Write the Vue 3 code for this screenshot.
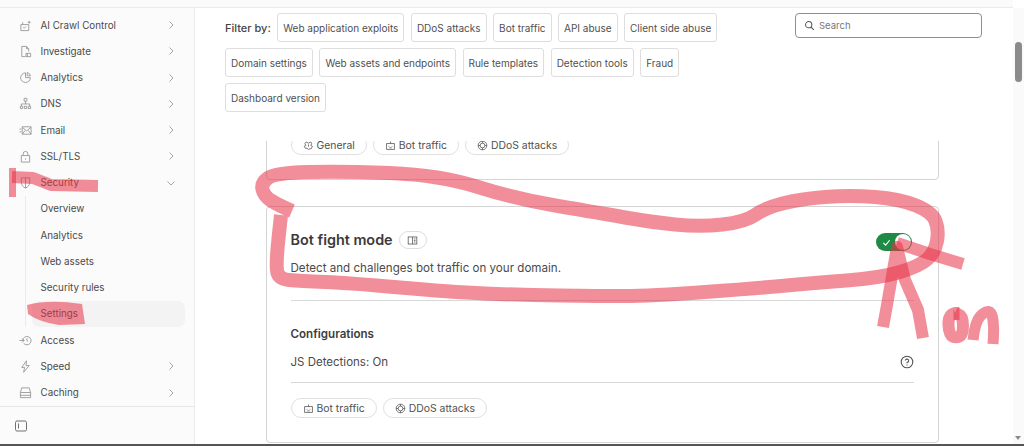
<script setup>
const iconPaths = {
  ai: 'M2 6h8.500v6.500H2zM4 3.500V6M4.500 9l1 1 2-2M11 2v3M9.500 3.500h3',
  doc: 'M3 1.500h5l2.500 2.500v3M3 1.500v11h4M8 1.500V4h2.500M7.500 9h5v3.500h-5zM9 9v3.500',
  clock: 'M7 2a5.200 5.200 0 1 0 5.200 5.200H7zM8.800 1.600a5 5 0 0 1 3.600 3.600H8.800z',
  dns: 'M5.500 1.500h3v3h-3zM7 4.500v3M2.500 10V7.500h9V10M1.500 10h2.500v2.500H1.500zM5.800 10h2.500v2.500H5.800zM10 10h2.500v2.500H10z',
  mail: 'M3.500 3h9.500v8H3.500zM3.500 3.500 8.200 7.500 13 3.500M3.500 11 6.500 7M13 11 10 7M.5 5.500h2M.5 8.500h2',
  lock: 'M2.500 6h9v7h-9zM4.500 6V4a2.500 2.500 0 0 1 5 0v2M7 9v1.500',
  shield: 'M2.500 2h9v5c0 3-2 5-4.500 6C4.500 12 2.500 10 2.500 7zM7 2v11',
  access: 'M4 7a4.500 4.500 0 1 1 1 3M.5 7h5M3.500 5l2 2-2 2M8.500 4.500V7l1.500 1',
  bolt: 'M8 .8 3 8h3l-1 5.200L11 6H7.600z',
  cache: 'M3 2h8l1.500 5v5.500h-11V7zM1.500 7h11M1.500 10h11',
  general: 'M4 2.500 7 4l3-1.500 1 2-1 2.500 2 1-1.500 3H9L7 12l-2-1.500H3L1.500 8l2-1-1-2.500zM7 5.500v3',
  bot: 'M2 4.500h10v7.500H2zM7 2v2.500M5 7.500v1M9 7.500v1M5.500 10h3',
  ddos: 'M7 1.500a5.500 5.500 0 1 0 0 11 5.500 5.500 0 0 0 0-11zM7 4a3 3 0 1 0 0 6 3 3 0 0 0 0-6zM1.500 7H4M10 7h2.500M7 1.500V4M7 10v2.500'
}

const navTop = [
  { label: 'AI Crawl Control', icon: 'ai', arrow: true },
  { label: 'Investigate', icon: 'doc', arrow: true },
  { label: 'Analytics', icon: 'clock', arrow: true },
  { label: 'DNS', icon: 'dns', arrow: true },
  { label: 'Email', icon: 'mail', arrow: true },
  { label: 'SSL/TLS', icon: 'lock', arrow: true }
]
const securityLinks = ['Overview', 'Analytics', 'Web assets', 'Security rules', 'Settings']
const navBottom = [
  { label: 'Access', icon: 'access', arrow: false },
  { label: 'Speed', icon: 'bolt', arrow: true },
  { label: 'Caching', icon: 'cache', arrow: true }
]
const filters = [
  'Web application exploits', 'DDoS attacks', 'Bot traffic', 'API abuse', 'Client side abuse',
  'Domain settings', 'Web assets and endpoints', 'Rule templates', 'Detection tools', 'Fraud',
  'Dashboard version'
]
const firstCardTags = [
  { label: 'General', icon: 'general' },
  { label: 'Bot traffic', icon: 'bot' },
  { label: 'DDoS attacks', icon: 'ddos' }
]
const botTags = [
  { label: 'Bot traffic', icon: 'bot' },
  { label: 'DDoS attacks', icon: 'ddos' }
]

// rounds off a hand-traced marker line through its points
function smooth(points) {
  let d = `M${points[0][0]} ${points[0][1]}`
  for (let i = 1; i < points.length - 1; i++) {
    const [x, y] = points[i]
    const [nx, ny] = points[i + 1]
    d += `Q${x} ${y} ${(x + nx) / 2} ${(y + ny) / 2}`
  }
  const last = points[points.length - 1]
  return d + `L${last[0]} ${last[1]}`
}

const loopPath = smooth([
  [292, 211], [278, 205], [264, 196], [261, 183], [275, 173], [340, 171], [440, 175],
  [516, 199], [600, 213], [650, 222], [700, 227], [745, 222], [765, 208], [800, 199],
  [850, 195], [900, 199], [932, 212], [939, 230], [935, 252], [920, 266], [880, 278],
  [813, 283], [760, 288], [650, 296], [600, 296], [520, 295], [450, 292], [350, 283],
  [300, 281], [278, 279], [276, 262], [281, 215]
])
const onLetterO = smooth([[955, 313], [948, 315], [949, 335], [956, 338], [963, 335], [963, 316], [955, 313]])
const onLetterN = smooth([[973, 340], [975, 322], [985, 311], [992, 312], [994, 328], [993, 344]])
</script>

<template>
  <div class="page">
    <div class="topbar"></div>
    <div class="body">
      <aside class="sidebar">
        <nav class="nav">
          <a v-for="item in navTop" :key="item.label" class="nav-item">
            <svg class="nav-icon" viewBox="0 0 14 14"><path :d="iconPaths[item.icon]" /></svg>
            <span class="nav-label">{{ item.label }}</span>
            <svg class="chevron" viewBox="0 0 10 10"><path d="M3.500 1.500 7 5 3.500 8.500" /></svg>
          </a>
          <a class="nav-item">
            <svg class="nav-icon" viewBox="0 0 14 14"><path :d="iconPaths.shield" /></svg>
            <span class="nav-label">Security</span>
            <svg class="chevron" viewBox="0 0 10 10"><path d="M1.500 3.500 5 7l3.500-3.500" /></svg>
          </a>
          <div class="sub-nav">
            <a
              v-for="link in securityLinks"
              :key="link"
              class="sub-item"
              :class="{ active: link === 'Settings' }"
            >{{ link }}</a>
          </div>
          <a v-for="item in navBottom" :key="item.label" class="nav-item">
            <svg class="nav-icon" viewBox="0 0 14 14"><path :d="iconPaths[item.icon]" /></svg>
            <span class="nav-label">{{ item.label }}</span>
            <svg v-if="item.arrow" class="chevron" viewBox="0 0 10 10"><path d="M3.500 1.500 7 5 3.500 8.500" /></svg>
          </a>
        </nav>
        <div class="sidebar-footer">
          <svg class="collapse-icon" viewBox="0 0 14 14">
            <rect x="1.500" y="2" width="11" height="10" rx="1.500" />
            <path d="M4.500 4.500v5" />
          </svg>
        </div>
      </aside>

      <main class="main">
        <div class="toolbar">
          <div class="filters">
            <span class="filter-label">Filter by:</span>
            <button v-for="f in filters" :key="f" class="filter-chip">{{ f }}</button>
          </div>
          <div class="search">
            <svg class="search-icon" viewBox="0 0 14 14">
              <circle cx="6" cy="6" r="4" />
              <path d="m9 9 3.500 3.500" />
            </svg>
            <span>Search</span>
          </div>
        </div>

        <div class="cards">
          <section class="card card-clipped">
            <div class="tags">
              <span v-for="t in firstCardTags" :key="t.label" class="tag">
                <svg class="tag-icon" viewBox="0 0 14 14"><path :d="iconPaths[t.icon]" /></svg>
                {{ t.label }}
              </span>
            </div>
          </section>

          <section class="card">
            <div class="card-head">
              <h3>Bot fight mode</h3>
              <span class="doc-pill">
                <svg viewBox="0 0 14 14">
                  <rect x="1.500" y="2.500" width="11" height="9" />
                  <path d="M7 2.500v9M8.800 5h2M8.800 7h2M8.800 9h2" />
                </svg>
              </span>
              <span class="toggle">
                <svg class="toggle-check" viewBox="0 0 10 10"><path d="M1.500 5.500 4 8l4.500-5.500" /></svg>
                <span class="toggle-knob"></span>
              </span>
            </div>
            <p class="card-desc">Detect and challenges bot traffic on your domain.</p>
            <hr class="divider" />
            <h4>Configurations</h4>
            <div class="config-row">
              <span>JS Detections: On</span>
              <svg class="help" viewBox="0 0 14 14">
                <circle cx="7" cy="7" r="5.800" />
                <path d="M5.300 5.500A1.700 1.700 0 1 1 7 7.500v.8M7 9.600v.9" />
              </svg>
            </div>
            <hr class="divider divider-config" />
            <div class="tags">
              <span v-for="t in botTags" :key="t.label" class="tag">
                <svg class="tag-icon" viewBox="0 0 14 14"><path :d="iconPaths[t.icon]" /></svg>
                {{ t.label }}
              </span>
            </div>
          </section>
        </div>
      </main>

      <div class="scrollbar">
        <div class="scroll-thumb"></div>
        <div class="scroll-arrow"></div>
      </div>
    </div>
    <div class="bottom-edge"></div>

    <!-- red marker scribbles drawn on top of the screenshot -->
    <svg class="scribbles" viewBox="0 0 1024 446">
      <path class="bar" d="M12.500 168v29" />
      <path class="thin" d="M12 177l21 1 18 7 47 1" />
      <path class="blob" d="M27 305q22-6 55-1l3 20-26 1q-20-3-31-11z" />
      <path class="loop" :d="loopPath" />
      <path class="thin" d="M897 243 930 254 963 264" />
      <path class="thin" d="M883 327 887 305 897 247 905 280 918 310 923 338" />
      <path class="on on-o" :d="onLetterO" />
      <path class="on" :d="onLetterN" />
      <path class="on-dark" d="M956.500 307v13" />
    </svg>
  </div>
</template>

<style>
html,
body {
  margin: 0;
  background: #fff;
}
</style>

<style scoped>
.page {
  position: relative;
  width: 1024px;
  height: 446px;
  overflow: hidden;
  display: flex;
  flex-direction: column;
  font-family: Inter, "Liberation Sans", sans-serif;
  color: #4a4a4a;
  background: #fff;
}

.topbar {
  height: 7px;
  flex: none;
  background: #fbfbfb;
  border-bottom: 1px solid #ebebeb;
  margin-right: 11px;
}

.body {
  flex: 1;
  min-height: 0;
  display: flex;
}

.sidebar {
  width: 194px;
  flex: none;
  display: flex;
  flex-direction: column;
  background: #fbfbfb;
  border-right: 1px solid #ebebeb;
}

.nav {
  flex: 1;
  min-height: 0;
  padding-top: 4px;
}

.nav-item {
  height: 26.250px;
  display: flex;
  align-items: center;
  padding-left: 19px;
  font-size: 9.800px;
}

.nav-icon {
  width: 13px;
  height: 13px;
  flex: none;
  fill: none;
  stroke: #9a9a9a;
  stroke-width: 1;
}

.nav-label {
  margin-left: 8.500px;
  flex: 1;
}

.chevron {
  width: 10px;
  height: 10px;
  margin-right: 18px;
  fill: none;
  stroke: #a5a5a5;
  stroke-width: 1;
}

.sub-nav {
  margin-left: 25px;
  border-left: 1px solid #ebebeb;
  display: flex;
  flex-direction: column;
}

.sub-item {
  height: 26.250px;
  display: flex;
  align-items: center;
  margin-left: 6px;
  margin-right: 9px;
  padding-left: 8.500px;
  font-size: 9.800px;
  border-radius: 7px;
}

.sub-item.active {
  background: #f3f3f3;
}

.sidebar-footer {
  height: 37px;
  flex: none;
  border-top: 1px solid #e6e6e6;
  display: flex;
  align-items: center;
  padding-left: 14px;
}

.collapse-icon {
  width: 14px;
  height: 14px;
  fill: none;
  stroke: #707070;
  stroke-width: 1;
}

.main {
  flex: 1;
  min-width: 0;
  display: flex;
  flex-direction: column;
}

.toolbar {
  display: flex;
  justify-content: space-between;
  align-items: flex-start;
  padding: 5px 31px 0 30px;
}

.filters {
  width: 505px;
  display: flex;
  flex-wrap: wrap;
  align-items: center;
  gap: 6px 6.500px;
}

.filter-label {
  font-size: 11px;
  font-weight: 500;
  color: #444;
}

.filter-chip {
  height: 29px;
  padding: 0 5px;
  background: #fff;
  border: 1px solid #dedede;
  border-radius: 3px;
  font-family: inherit;
  font-size: 10px;
  color: #505050;
}

.search {
  width: 187px;
  height: 25px;
  box-sizing: border-box;
  display: flex;
  align-items: center;
  gap: 4px;
  padding-left: 8px;
  border: 1px solid #8f8f8f;
  border-radius: 4px;
  font-size: 9.500px;
  color: #777;
}

.search-icon {
  width: 11px;
  height: 11px;
  fill: none;
  stroke: #555;
  stroke-width: 1.300;
}

.cards {
  flex: 1;
  min-height: 0;
  overflow: hidden;
  margin-top: 29px;
  padding-left: 71px;
}

.card {
  width: 673px;
  box-sizing: border-box;
  padding: 24px 24px 24px 23.500px;
  border: 1px solid #d4d4d4;
  border-radius: 4px;
}

.card-clipped {
  margin-top: -31px;
  margin-bottom: 26px;
}

.card-head {
  display: flex;
  align-items: flex-start;
  height: 20px;
}

.card-head h3 {
  margin: 0;
  font-size: 14.400px;
  line-height: 18px;
  font-weight: 600;
  color: #3a3a3a;
}

.doc-pill {
  margin-left: 6px;
  width: 28px;
  height: 18px;
  box-sizing: border-box;
  display: flex;
  align-items: center;
  justify-content: center;
  border: 1px solid #dedede;
  border-radius: 9px;
}

.doc-pill svg {
  width: 11px;
  height: 11px;
  fill: none;
  stroke: #555;
  stroke-width: 1;
}

.toggle {
  margin-top: 2px;
  margin-left: auto;
  margin-right: 2px;
  width: 36px;
  height: 18px;
  box-sizing: border-box;
  display: flex;
  align-items: center;
  justify-content: space-between;
  padding: 0 1px 0 6px;
  background: #1f8a45;
  border-radius: 9px;
}

.toggle-check {
  width: 9px;
  height: 9px;
  fill: none;
  stroke: #fff;
  stroke-width: 1.300;
}

.toggle-knob {
  width: 16px;
  height: 16px;
  border-radius: 50%;
  background: #fff;
}

.card-desc {
  margin: 9px 0 0;
  font-size: 11.600px;
  line-height: 16px;
  color: #4a4a4a;
}

.divider {
  margin: 24px 0 0;
  border: 0;
  border-top: 1px solid #d8d8d8;
}

h4 {
  margin: 26px 0 0;
  font-size: 11.600px;
  line-height: 15px;
  font-weight: 600;
  color: #3d3d3d;
}

.config-row {
  display: flex;
  justify-content: space-between;
  align-items: center;
  margin-top: 12px;
  height: 16px;
  font-size: 11.500px;
}

.help {
  width: 14px;
  height: 14px;
  fill: none;
  stroke: #555;
  stroke-width: 1.100;
}

.divider-config {
  margin-top: 12px;
}

.tags {
  display: flex;
  gap: 6px;
}

.divider-config + .tags {
  margin-top: 15px;
}

.tag {
  height: 20px;
  box-sizing: border-box;
  display: flex;
  align-items: center;
  gap: 3px;
  padding: 0 11px;
  border: 1px solid #e0e0e0;
  border-radius: 10px;
  font-size: 10.400px;
  color: #505050;
}

.tag-icon {
  width: 11px;
  height: 11px;
  fill: none;
  stroke: #555;
  stroke-width: 1;
}

.scrollbar {
  position: relative;
  width: 11px;
  flex: none;
  background: #fafafa;
}

.scroll-thumb {
  position: absolute;
  top: 34px;
  left: 2px;
  width: 7px;
  height: 40px;
  border-radius: 4px;
  background: #8b8b8b;
}

.scroll-arrow {
  position: absolute;
  bottom: 4px;
  left: 2px;
  border-left: 3.500px solid transparent;
  border-right: 3.500px solid transparent;
  border-top: 4px solid #8b8b8b;
}

.bottom-edge {
  height: 2px;
  flex: none;
  background: #555;
}

.scribbles {
  position: absolute;
  inset: 0;
  width: 1024px;
  height: 446px;
  pointer-events: none;
  fill: none;
  stroke: rgb(232, 50, 70);
}

.scribbles path {
  stroke-opacity: 0.55;
  stroke-linejoin: round;
}

.bar {
  stroke-width: 7;
}

.thin {
  stroke-width: 12;
}

.loop {
  stroke-width: 14;
}

.scribbles .blob {
  stroke: none;
  fill: rgba(232, 50, 70, 0.55);
}

.on {
  stroke-width: 11;
}

.on-o {
  stroke-width: 12;
}

.on-dark {
  stroke-width: 6;
}
</style>
